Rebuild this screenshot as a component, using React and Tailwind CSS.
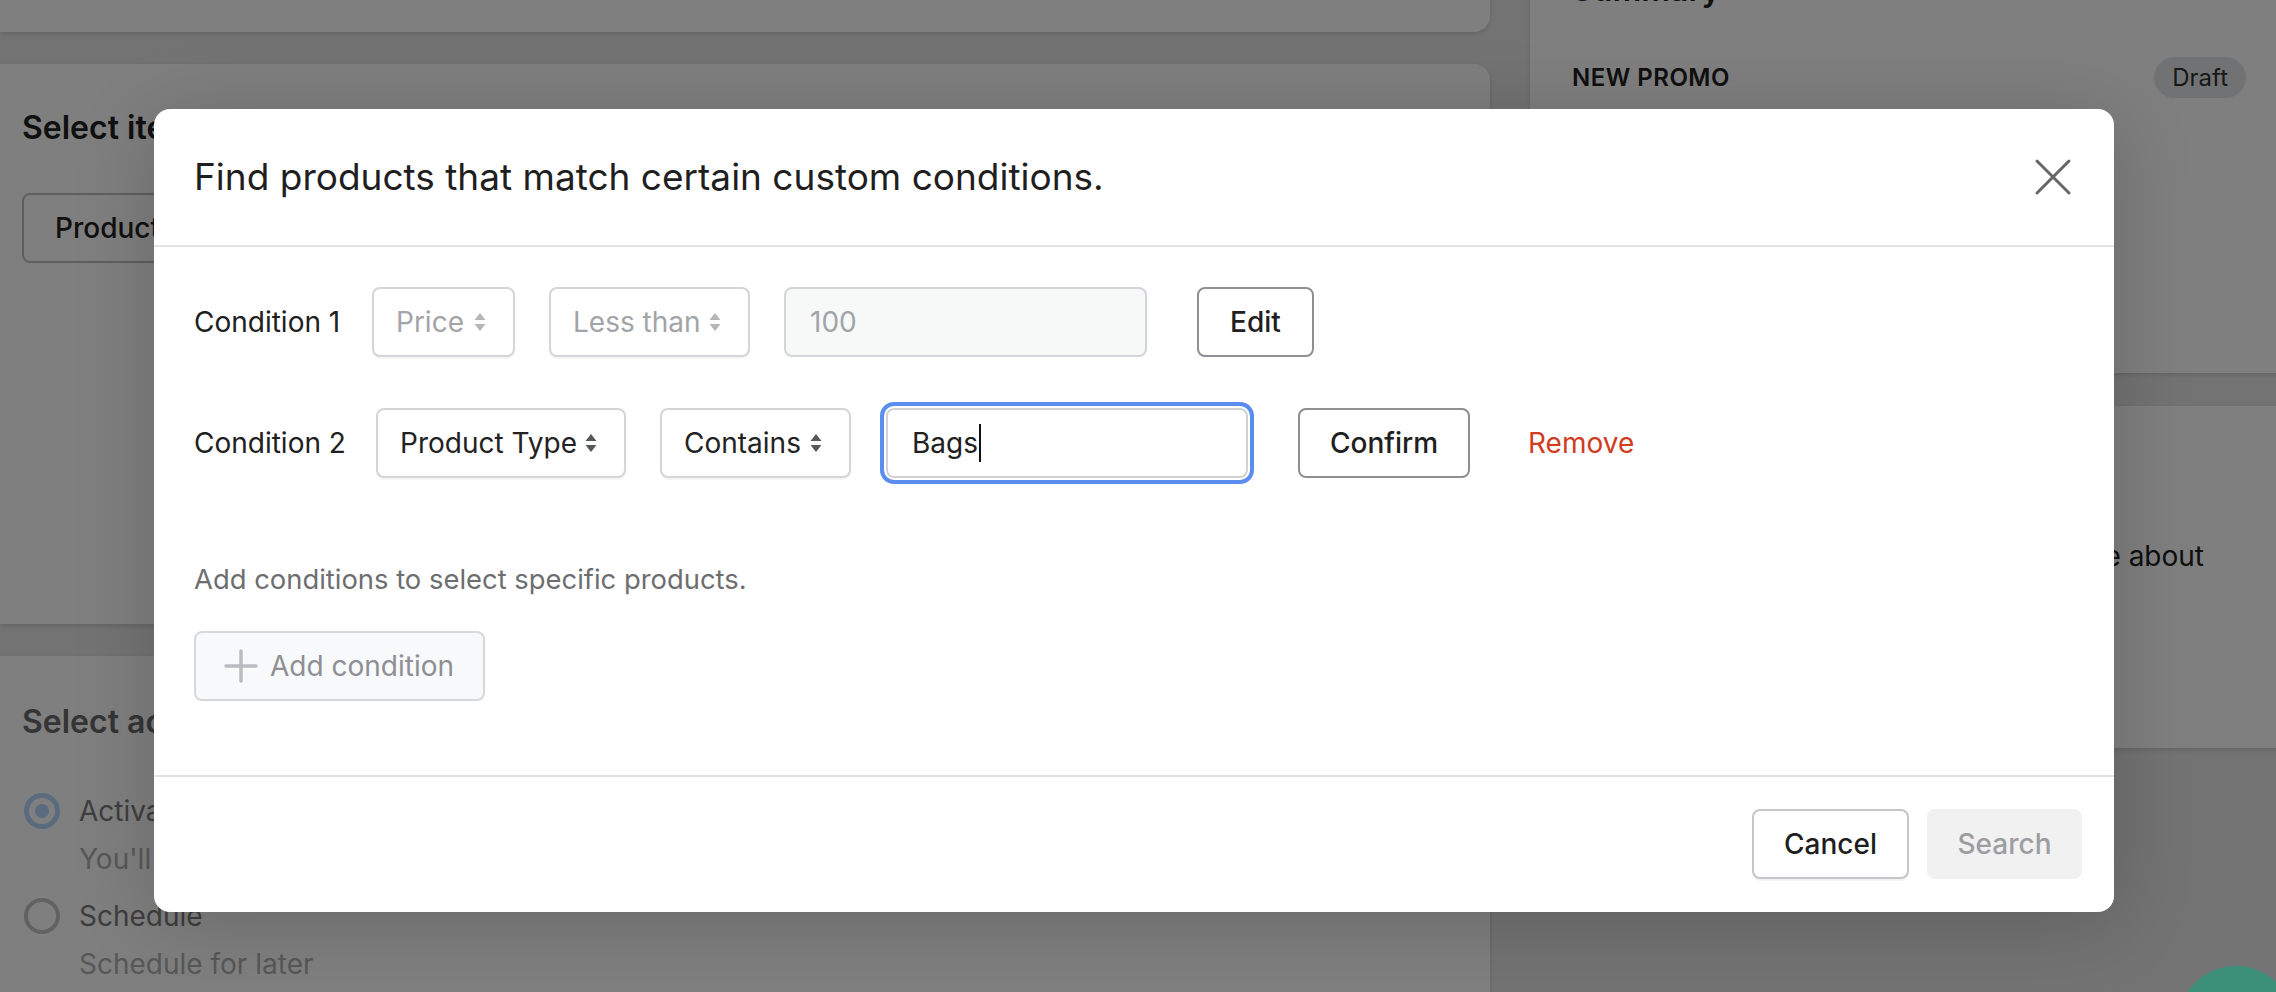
import React from "react";

function Arrows({ muted }) {
  return (
    <svg
      width="14"
      height="22"
      viewBox="0 0 14 22"
      fill="currentColor"
      className={muted ? "text-[#b3b6bb]" : "text-[#55585d]"}
    >
      <path d="M7 2 L12.5 9 H1.5 Z" />
      <path d="M7 20 L12.5 13 H1.5 Z" />
    </svg>
  );
}

function Select({ label, width, muted }) {
  return (
    <div
      className={`h-[70px] ${width} shrink-0 flex items-center justify-between pl-[22px] pr-[26px] rounded-[8px] border-2 border-[#d3d5d9] bg-white shadow-[0_2px_0_rgba(0,0,0,0.04)] ${
        muted ? "text-[#a2a4a8]" : "text-[#222]"
      }`}
    >
      <span>{label}</span>
      <Arrows muted={muted} />
    </div>
  );
}

export default function App() {
  return (
    <div className="relative w-[2276px] h-[992px] overflow-hidden bg-[#e6e6e6] font-['Inter','Noto_Sans',sans-serif] text-[#202020]">
      {/* page behind the dialog */}
      <div className="flex items-start gap-[40px]">
        <div className="w-[1490px] shrink-0 flex flex-col gap-[32px]">
          <div className="h-[92px] -mt-[60px] bg-white rounded-br-[16px] shadow-[0_2px_4px_rgba(0,0,0,0.12)]" />

          <div className="h-[560px] bg-white rounded-r-[16px] shadow-[0_2px_4px_rgba(0,0,0,0.12)] pl-[22px] pt-[44px]">
            <h2 className="text-[32px] leading-[40px] font-semibold">Select items</h2>
            <div className="mt-[45px] w-[260px] h-[70px] rounded-[8px] border-2 border-[#bfbfbf] flex items-center pl-[31px] text-[28px] font-medium">
              Products
            </div>
          </div>

          <div className="h-[400px] bg-white rounded-tr-[16px] shadow-[0_2px_4px_rgba(0,0,0,0.12)] pl-[22px] pt-[46px]">
            <h2 className="text-[32px] leading-[40px] font-semibold text-[#6a6a6a]">Select activation type</h2>
            <div className="mt-[49px] flex flex-col">
              <div className="flex items-center gap-[19px] h-[40px] pl-[2px]">
                <span className="w-[36px] h-[36px] rounded-full border-[5px] border-[#b4d4ff] flex items-center justify-center">
                  <span className="w-[14px] h-[14px] rounded-full bg-[#b4d4ff]" />
                </span>
                <span className="text-[28px] text-[#7c7c7c]">Activate now</span>
              </div>
              <div className="pl-[57px] text-[28px] leading-[40px] mt-[8px] text-[#b0b0b0]">You'll be able to activate right away</div>
              <div className="flex items-center gap-[19px] h-[40px] pl-[2px] mt-[17px]">
                <span className="w-[36px] h-[36px] rounded-full border-[4px] border-[#c4c4c4]" />
                <span className="text-[28px] text-[#7c7c7c]">Schedule</span>
              </div>
              <div className="pl-[57px] text-[28px] leading-[40px] mt-[8px] text-[#b0b0b0]">Schedule for later</div>
            </div>
          </div>
        </div>

        <div className="flex-1 flex flex-col gap-[33px] -mr-[40px]">
          <div className="h-[433px] -mt-[60px] bg-white rounded-bl-[16px] shadow-[0_2px_4px_rgba(0,0,0,0.12)] pl-[42px] pr-[70px] pt-[30px]">
            <h2 className="text-[32px] leading-[40px] font-semibold">Summary</h2>
            <div className="mt-[47px] flex items-center justify-between">
              <span className="text-[24px] font-semibold tracking-[0.5px]">NEW PROMO</span>
              <span className="h-[41px] px-[18px] rounded-full bg-[#e3e4e6] flex items-center text-[24px] text-[#303030]">Draft</span>
            </div>
          </div>
          <div className="h-[342px] bg-white rounded-l-[16px] shadow-[0_2px_4px_rgba(0,0,0,0.12)] pt-[130px] pl-[42px]">
            <div className="w-[632px] flex justify-end text-[28px] leading-[40px] whitespace-nowrap">
              <span>This promo applies to items. Learn more about</span>
            </div>
          </div>
        </div>
      </div>

      {/* overlay */}
      <div className="absolute inset-0 bg-black/50" />

      {/* chat launcher */}
      <div className="absolute left-[2178px] top-[966px] w-[116px] h-[116px] rounded-full bg-[#3b8e77]" />

      {/* dialog */}
      <div className="absolute left-[154px] top-[109px] w-[1960px] h-[803px] bg-white rounded-[16px] shadow-[0_10px_80px_rgba(0,0,0,0.18)] flex flex-col">
        <div className="h-[138px] shrink-0 flex items-center justify-between pl-[40px] pr-[42px] border-b-2 border-[#e3e3e3]">
          <h1 className="text-[37px] leading-[44px] text-[#1f1f1f]">Find products that match certain custom conditions.</h1>
          <svg width="38" height="38" viewBox="0 0 38 38" fill="none" stroke="#666" strokeWidth="3" strokeLinecap="round">
            <path d="M3 3 L35 35 M35 3 L3 35" />
          </svg>
        </div>

        <div className="flex-1 pt-[40px] px-[40px] text-[28px]">
          <div className="flex items-center h-[70px]">
            <span className="w-[178px] shrink-0">Condition 1</span>
            <Select label="Price" width="w-[143px]" muted />
            <div className="w-[34px] shrink-0" />
            <Select label="Less than" width="w-[201px]" muted />
            <div className="ml-[34px] w-[363px] h-[70px] shrink-0 rounded-[8px] border-2 border-[#d3d5d9] bg-[#f7f8f8] flex items-center pl-[24px] text-[#a2a4a8]">
              100
            </div>
            <div className="ml-[50px] w-[117px] h-[70px] shrink-0 rounded-[8px] border-2 border-[#8d8f93] flex items-center justify-center font-medium">
              Edit
            </div>
          </div>

          <div className="flex items-center h-[70px] mt-[51px]">
            <span className="w-[182px] shrink-0">Condition 2</span>
            <Select label="Product Type" width="w-[250px]" />
            <div className="w-[34px] shrink-0" />
            <Select label="Contains" width="w-[191px]" />
            <div className="ml-[35px] w-[362px] h-[70px] shrink-0 rounded-[8px] border-2 border-[#cfd1d5] bg-white ring-4 ring-[#5b8def] ring-offset-2 flex items-center pl-[24px]">
              Bags<span className="w-[2px] h-[38px] bg-[#111] ml-[1px]" />
            </div>
            <div className="ml-[50px] w-[172px] h-[70px] shrink-0 rounded-[8px] border-2 border-[#8d8f93] flex items-center justify-center font-medium">
              Confirm
            </div>
            <span className="ml-[58px] text-[#d13b1e]">Remove</span>
          </div>

          <p className="mt-[81px] text-[27.4px] leading-[40px] text-[#6d6e70]">Add conditions to select specific products.</p>

          <div className="mt-[32px] w-[291px] h-[70px] rounded-[8px] border-2 border-[#d6d8db] bg-[#f8f9fa] flex items-center pl-[28px] gap-[12px] text-[#8e8f93]">
            <svg width="34" height="34" viewBox="0 0 34 34" stroke="#b9bcc0" strokeWidth="3.5" strokeLinecap="round">
              <path d="M17 2 V32 M2 17 H32" />
            </svg>
            <span>Add condition</span>
          </div>
        </div>

        <div className="h-[137px] shrink-0 border-t-2 border-[#e3e3e3] flex items-center justify-end gap-[18px] pr-[32px] pb-[2px] text-[28px]">
          <div className="w-[157px] h-[70px] rounded-[8px] border-2 border-[#c4c6ca] shadow-[0_2px_0_rgba(0,0,0,0.05)] flex items-center justify-center font-medium text-[#1f1f1f]">
            Cancel
          </div>
          <div className="w-[155px] h-[70px] rounded-[8px] bg-[#f1f1f1] flex items-center justify-center font-medium text-[#9d9ea1]">
            Search
          </div>
        </div>
      </div>
    </div>
  );
}
